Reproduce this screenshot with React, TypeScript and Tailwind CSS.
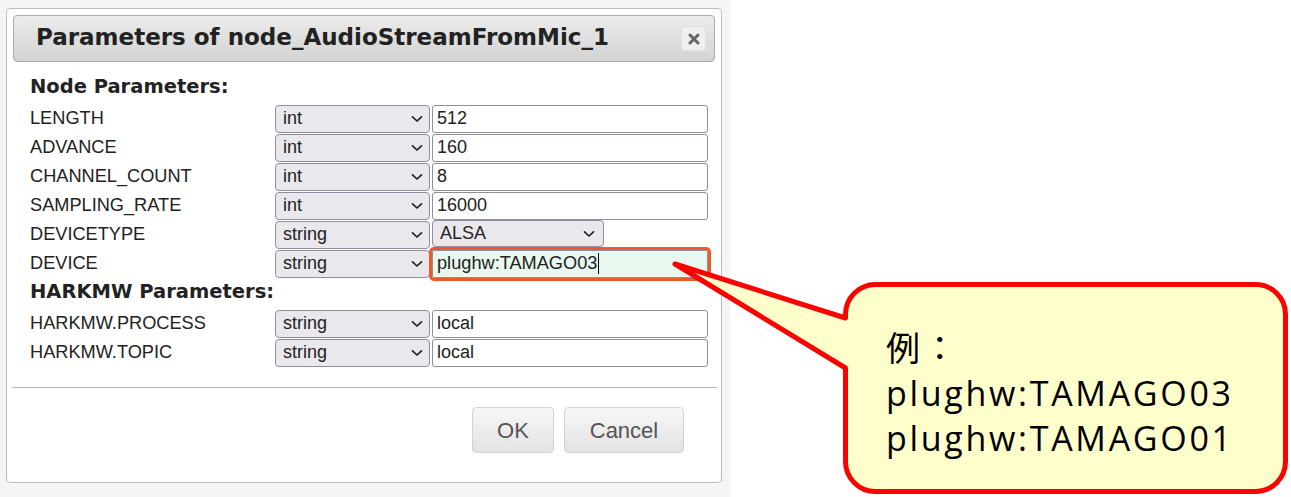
import React from "react";

const rows1 = [
  { label: "LENGTH", type: "int", value: "512" },
  { label: "ADVANCE", type: "int", value: "160" },
  { label: "CHANNEL_COUNT", type: "int", value: "8" },
  { label: "SAMPLING_RATE", type: "int", value: "16000" },
  { label: "DEVICETYPE", type: "string", value: "ALSA", select: true },
  { label: "DEVICE", type: "string", value: "plughw:TAMAGO03", focused: true },
];

const rows2 = [
  { label: "HARKMW.PROCESS", type: "string", value: "local" },
  { label: "HARKMW.TOPIC", type: "string", value: "local" },
];

function Chevron() {
  return (
    <svg width="12" height="8" viewBox="0 0 12 8" className="shrink-0">
      <path d="M1.5 1.8 L6 6 L10.5 1.8" fill="none" stroke="#222" strokeWidth="1.7" strokeLinecap="round" strokeLinejoin="round" />
    </svg>
  );
}

type Row = { label: string; type: string; value: string; select?: boolean; focused?: boolean };

function ParamRow({ row }: { row: Row }) {
  return (
    <div className="flex items-center h-[29px]">
      <div className="w-[245px] text-[18.2px] text-[#222] font-['Liberation_Sans',Arial,sans-serif]">{row.label}</div>
      <div className="flex items-center justify-between h-[28px] w-[155px] rounded-[4px] border border-[#8f8f9d] bg-[#e9e9ed] pl-[7px] pr-[6px] text-[18px] text-[#222] font-['Liberation_Sans',Arial,sans-serif]">
        <span>{row.type}</span>
        <Chevron />
      </div>
      {row.select ? (
        <div className="ml-[2px] flex items-center justify-between h-[27px] w-[172px] self-start rounded-[4px] border border-[#8f8f9d] bg-[#e9e9ed] pl-[7px] pr-[8px] text-[18px] text-[#222] font-['Liberation_Sans',Arial,sans-serif]">
          <span>{row.value}</span>
          <Chevron />
        </div>
      ) : row.focused ? (
        <div className="ml-[2px] flex items-center h-[28px] w-[276px] rounded-[2px] border border-[#8f8f9d] bg-[#e8f8ef] pl-[4px] text-[18.2px] text-[#222] font-['Liberation_Sans',Arial,sans-serif] outline-[3px] outline-solid outline-[#ec5a2b]">
          <span>{row.value}</span>
          <span className="ml-[1px] inline-block w-[1px] h-[21px] bg-black" />
        </div>
      ) : (
        <div className="ml-[2px] flex items-center h-[28px] w-[276px] rounded-[3px] border border-[#8f8f9d] bg-white pl-[4px] text-[18px] text-[#222] font-['Liberation_Sans',Arial,sans-serif]">
          {row.value}
        </div>
      )}
    </div>
  );
}

function Dialog() {
  return (
    <div className="w-[716px] h-[475px] border border-[#bdbdbd] rounded-[4px] bg-white px-[6px] pt-[6px] flex flex-col">
      <div className="h-[47px] border border-[#aaaaaa] rounded-[4px] bg-linear-to-b from-[#ececec] to-[#d3d3d3] flex items-center justify-between pl-[22px] pr-[8px]">
        <div className="mb-[3px] font-['DejaVu_Sans',sans-serif] font-bold text-[23px] leading-[27px] text-[#222]">
          Parameters of node_AudioStreamFromMic_1
        </div>
        <div className="w-[25px] h-[25px] rounded-[3px] border border-[#e0e0e0] bg-[#efefef] flex items-center justify-center">
          <svg width="12" height="12" viewBox="0 0 12 12">
            <path d="M2 2 L10 10 M10 2 L2 10" stroke="#666" strokeWidth="3" strokeLinecap="round" />
          </svg>
        </div>
      </div>
      <div className="pl-[17px] flex flex-col">
        <div className="mt-[14px] mb-[6px] font-['DejaVu_Sans',sans-serif] font-bold text-[19.5px] leading-[22px] text-[#222]">
          Node Parameters:
        </div>
        {rows1.map((r) => (
          <ParamRow key={r.label} row={r} />
        ))}
        <div className="mt-[3px] mb-[6px] font-['DejaVu_Sans',sans-serif] font-bold text-[19.5px] leading-[22px] text-[#222]">
          HARKMW Parameters:
        </div>
        {rows2.map((r) => (
          <ParamRow key={r.label} row={r} />
        ))}
      </div>
      <div className="mt-[20px] h-px bg-[#b9b9b9] -ml-[1px] -mr-[2px]" />
      <div className="mt-[19px] flex justify-end gap-[10px] mr-[31px]">
        <div className="w-[82px] h-[46px] rounded-[4px] border border-[#d3d3d3] bg-linear-to-b from-[#f7f7f7] to-[#e3e3e3] flex items-center justify-center text-[22px] text-[#555] font-['Liberation_Sans',Arial,sans-serif]">
          OK
        </div>
        <div className="w-[120px] h-[46px] rounded-[4px] border border-[#d3d3d3] bg-linear-to-b from-[#f7f7f7] to-[#e3e3e3] flex items-center justify-center text-[22px] text-[#555] font-['Liberation_Sans',Arial,sans-serif]">
          Cancel
        </div>
      </div>
    </div>
  );
}

function Callout() {
  return (
    <>
      <svg className="absolute left-0 top-0 pointer-events-none" width="1291" height="497" viewBox="0 0 1291 497">
        <path
          d="M 675 264 L 845.5 318 L 845.5 314.5 A 30 30 0 0 1 875.5 284.5 L 1255.5 284.5 A 30 30 0 0 1 1285.5 314.5 L 1285.5 461.5 A 30 30 0 0 1 1255.5 491.5 L 875.5 491.5 A 30 30 0 0 1 845.5 461.5 L 845.5 368 Z"
          fill="#ffffcc"
          stroke="#ff0000"
          strokeWidth="5"
          strokeLinejoin="round"
        />
      </svg>
      <div className="absolute left-[886px] top-[326px] text-[34px] leading-[45px] tracking-[2.7px] text-black font-['Open_Sans','Noto_Sans_CJK_JP',sans-serif]">
        <div>例：</div>
        <div>plughw:TAMAGO03</div>
        <div>plughw:TAMAGO01</div>
      </div>
    </>
  );
}

export default function App() {
  return (
    <div className="relative w-[1291px] h-[497px] bg-white flex overflow-hidden">
      <div className="w-[730px] h-full bg-[#f5f5f5] pt-[8px] pl-[6px]">
        <Dialog />
      </div>
      <Callout />
    </div>
  );
}
